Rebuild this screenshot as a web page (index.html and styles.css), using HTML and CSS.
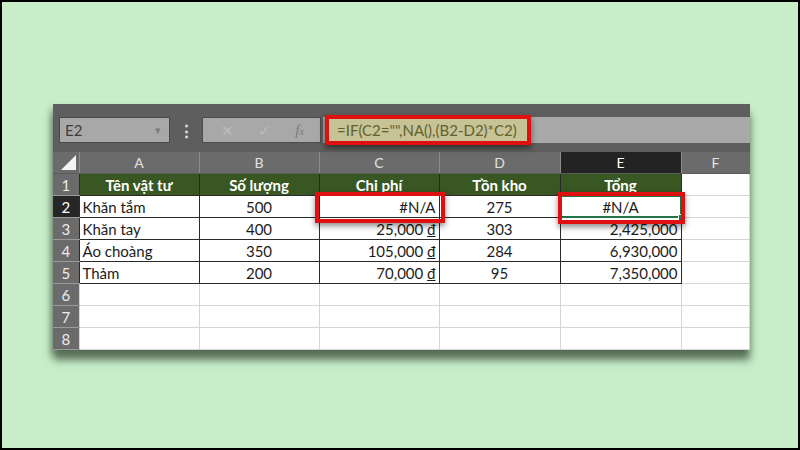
FILE: index.html
```html
<!DOCTYPE html>
<html lang="vi">
<head>
  <meta charset="UTF-8" />
  <meta name="viewport" content="width=device-width, initial-scale=1.0"/>
  <title>Hàm NA trong Excel</title>
  <link rel="stylesheet" href="styles.css">
</head>
<body>
  <div class="frame">
    <div class="sheet">
      <!-- thanh công thức -->
      <div class="formula-bar">
        <div class="name-box">
          <span>E2</span>
          <span class="caret">&#9662;</span>
        </div>
        <div class="dots">&#8942;</div>
        <div class="btns">
          <span class="btn">&#10005;</span>
          <span class="btn">&#10003;</span>
          <span class="btn fx"><i>f</i><i class="x">x</i></span>
        </div>
        <div class="input">
          <span class="formula">=IF(C2="",NA(),(B2-D2)*C2)</span>
        </div>
      </div>

      <table class="grid">
        <colgroup>
          <col class="c-row">
          <col class="c-120"><col class="c-120"><col class="c-120">
          <col class="c-121"><col class="c-121">
          <col>
        </colgroup>
        <thead>
          <tr>
            <th class="corner"><span class="tri"></span></th>
            <th>A</th><th>B</th><th>C</th><th>D</th><th class="active">E</th><th>F</th>
          </tr>
        </thead>
        <tbody>
          <tr class="head">
            <th>1</th>
            <td class="t">Tên vật tư</td>
            <td class="t">Số lượng</td>
            <td class="t">Chi phí</td>
            <td class="t">Tồn kho</td>
            <td class="t">Tổng</td>
            <td></td>
          </tr>
          <tr>
            <th class="active">2</th>
            <td class="t l">Khăn tắm</td>
            <td class="t c">500</td>
            <td class="t r mark-cell">#N/A<span class="mark mark-c"></span></td>
            <td class="t c">275</td>
            <td class="t c mark-cell">#N/A<span class="select"><span class="handle"></span></span><span class="mark mark-e"></span></td>
            <td></td>
          </tr>
          <tr>
            <th>3</th>
            <td class="t l">Khăn tay</td>
            <td class="t c">400</td>
            <td class="t r">25,000 <u>đ</u></td>
            <td class="t c">303</td>
            <td class="t r">2,425,000</td>
            <td></td>
          </tr>
          <tr>
            <th>4</th>
            <td class="t l">Áo choàng</td>
            <td class="t c">350</td>
            <td class="t r">105,000 <u>đ</u></td>
            <td class="t c">284</td>
            <td class="t r">6,930,000</td>
            <td></td>
          </tr>
          <tr>
            <th>5</th>
            <td class="t l">Thảm</td>
            <td class="t c">200</td>
            <td class="t r">70,000 <u>đ</u></td>
            <td class="t c">95</td>
            <td class="t r">7,350,000</td>
            <td></td>
          </tr>
          <tr><th>6</th><td></td><td></td><td></td><td></td><td></td><td></td></tr>
          <tr><th>7</th><td></td><td></td><td></td><td></td><td></td><td></td></tr>
          <tr><th>8</th><td></td><td></td><td></td><td></td><td></td><td></td></tr>
        </tbody>
      </table>
    </div>
  </div>
</body>
</html>
```

FILE: styles.css
```css
body {
  margin: 0;
  background: #000;
  font-family: Lato, "Liberation Sans", sans-serif;
}

.frame {
  width: 796px;
  height: 446px;
  margin: 2px;
  background: #c8eec9;
  padding: 102px 0 0 51px;
  box-sizing: border-box;
}

.sheet {
  width: 697px;
  background: #5e5e5e;
  box-shadow: 0 10px 8px rgba(60, 80, 60, 0.75), -3px 4px 6px rgba(60, 80, 60, 0.3);
}

/* formula bar */
.formula-bar {
  display: flex;
  align-items: center;
  height: 26px;
  padding: 13px 0 9px 6px;
  background: #5e5e5e;
}

.name-box {
  width: 111px;
  height: 26px;
  box-sizing: border-box;
  background: #a8a8a8;
  border: 1px solid #484848;
  display: flex;
  align-items: center;
  justify-content: space-between;
  padding: 0 8px 0 5px;
  font-size: 15px;
  color: #3e3e3e;
}

.caret {
  font-size: 11px;
  color: #7c7c7c;
}

.dots {
  width: 32px;
  text-align: center;
  color: #e0e0e0;
  font-size: 17px;
  font-weight: bold;
}

.btns {
  width: 119px;
  height: 26px;
  box-sizing: border-box;
  background: #a8a8a8;
  border: 1px solid #4c4c4c;
  display: flex;
  align-items: center;
  justify-content: space-around;
  padding: 0 4px 0 6px;
  color: #bdbdbd;
  font-size: 15px;
}

.fx {
  font-family: "Liberation Serif", serif;
  color: #7a7a7a;
  font-size: 15px;
}

.fx .x {
  font-size: 10px;
}

.input {
  flex: 1;
  height: 26px;
  margin-left: 2px;
  background: #a9a9a9;
  display: flex;
  align-items: center;
}

.formula {
  margin: -2px 0 -2px 2px;
  height: 30px;
  box-sizing: border-box;
  padding: 0 10px 0 8px;
  display: flex;
  align-items: center;
  background: #c7c397;
  border: 4px solid #e01010;
  box-shadow: 0 3px 6px rgba(0, 0, 0, 0.5);
  color: #62612e;
  font-size: 15px;
  white-space: nowrap;
}

/* grid */
.grid {
  border-collapse: collapse;
  table-layout: fixed;
  width: 697px;
  font-size: 15px;
}

.c-row { width: 26px; }
.c-120 { width: 120px; }
.c-121 { width: 121px; }

.grid th,
.grid td {
  height: 21px;
  padding: 0 3px;
  white-space: nowrap;
}

.grid thead th {
  background: #6b6b6b;
  color: #e2e2e2;
  font-weight: normal;
  font-size: 14px;
  border-left: 1px solid #8c8c8c;
  border-bottom: 1px solid #5a5a5a;
}

.grid thead th.active {
  background: #232323;
  color: #fff;
}

.grid thead th.corner {
  border-left: none;
  position: relative;
}

.tri {
  position: absolute;
  right: 3px;
  bottom: 3px;
  width: 0;
  height: 0;
  border-left: 15px solid transparent;
  border-bottom: 15px solid #f4f4f4;
}

.grid tbody th {
  background: #6b6b6b;
  color: #ececec;
  font-weight: normal;
  font-size: 15px;
  border-bottom: 1px solid #9a9a9a;
  padding: 0;
}

.grid tbody th.active {
  background: #262626;
  color: #fff;
}

.grid td {
  background: #fff;
  color: #1c1c1c;
  border: 1px solid #d6d6d6;
}

.grid td.t {
  border: 1px solid #2a2a2a;
}

.head td.t {
  background: #385723;
  color: #fff;
  font-weight: bold;
  text-align: center;
}

.l { text-align: left; }
.c { text-align: center; }
.r { text-align: right; }

.mark-cell {
  position: relative;
}

.mark {
  position: absolute;
  border: 4px solid #e01010;
  box-shadow: 0 3px 6px rgba(0, 0, 0, 0.45);
}

.mark-c {
  left: -5px;
  right: -6px;
  top: -4px;
  bottom: -6px;
}

.mark-e {
  left: -3px;
  right: -4px;
  top: -4px;
  bottom: -7px;
}

.select {
  position: absolute;
  left: -1px;
  right: -1px;
  top: -1px;
  bottom: -1px;
  border: 2px solid #217346;
}

.handle {
  position: absolute;
  right: -5px;
  bottom: -5px;
  width: 5px;
  height: 5px;
  background: #217346;
  border: 1px solid #fff;
}
```
